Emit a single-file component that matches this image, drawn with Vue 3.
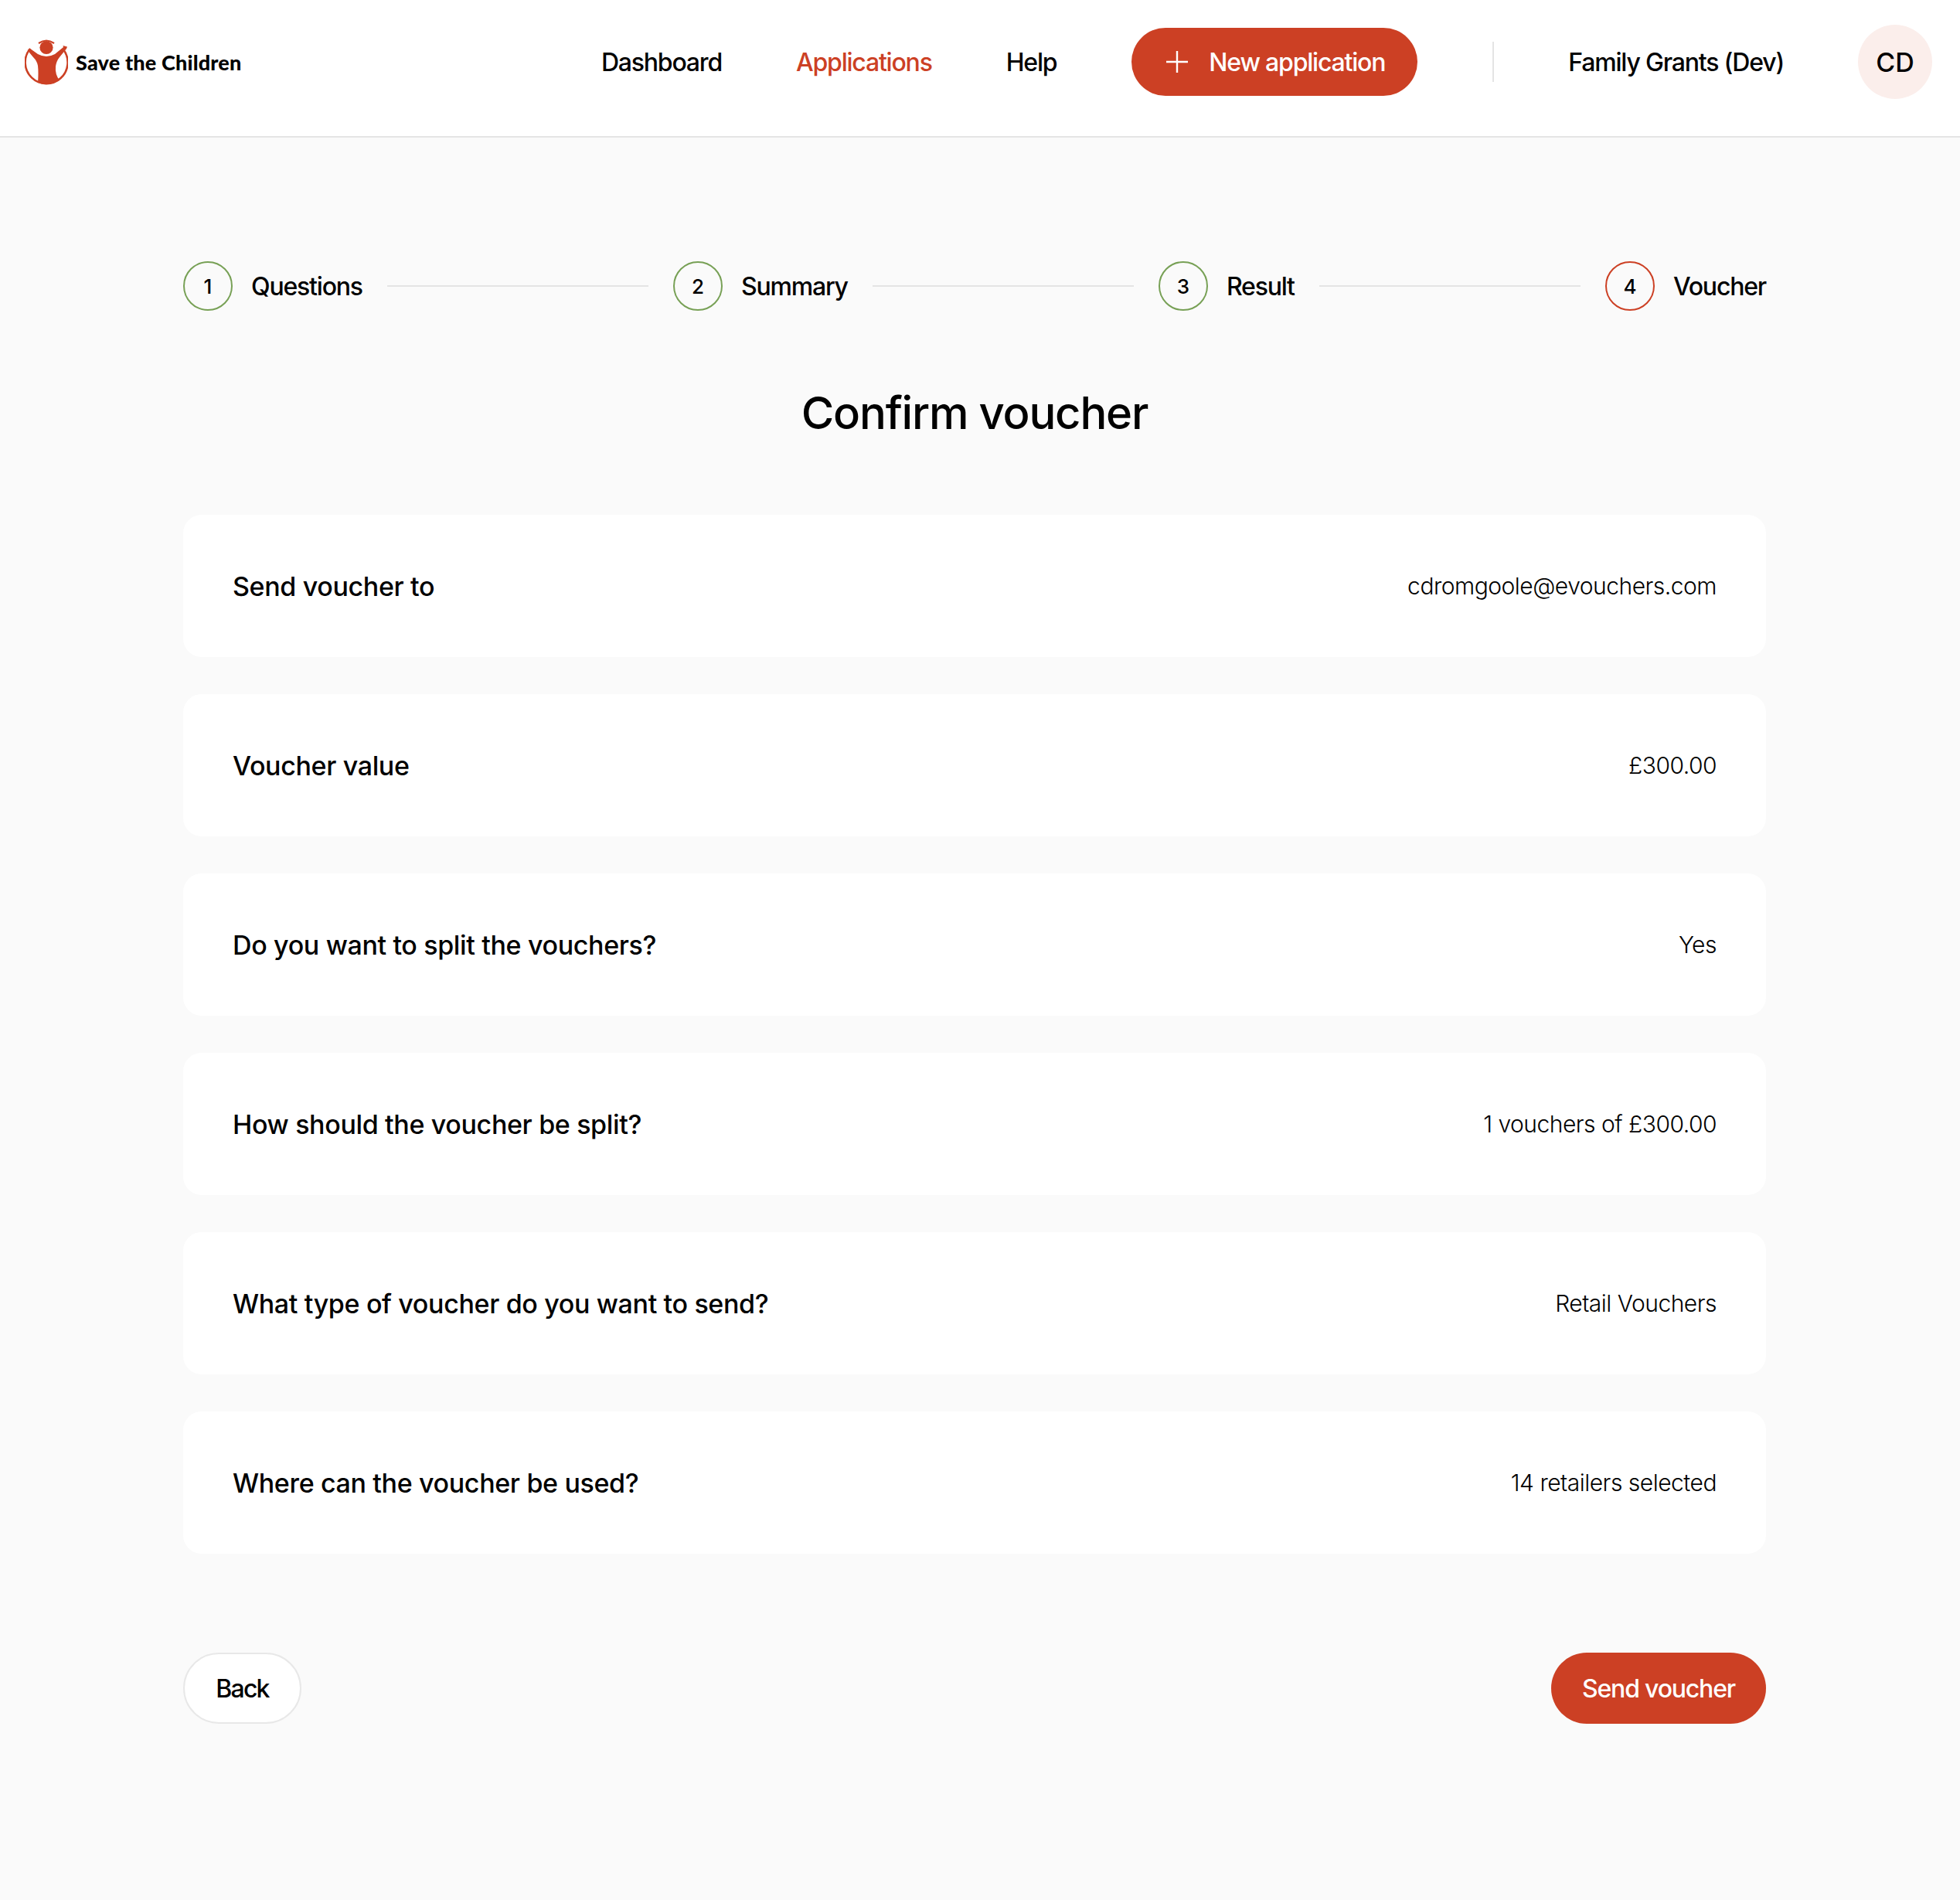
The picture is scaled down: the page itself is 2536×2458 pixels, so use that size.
<script setup>
const steps = [
  { n: 1, label: 'Questions' },
  { n: 2, label: 'Summary' },
  { n: 3, label: 'Result' },
  { n: 4, label: 'Voucher', current: true }
]

const rows = [
  { q: 'Send voucher to', a: 'cdromgoole@evouchers.com' },
  { q: 'Voucher value', a: '£300.00' },
  { q: 'Do you want to split the vouchers?', a: 'Yes' },
  { q: 'How should the voucher be split?', a: '1 vouchers of £300.00' },
  { q: 'What type of voucher do you want to send?', a: 'Retail Vouchers' },
  { q: 'Where can the voucher be used?', a: '14 retailers selected' }
]
</script>

<template>
  <div class="page">
    <header class="top">
      <div class="logo">
        <svg width="56" height="60" viewBox="0 0 56 60">
          <path d="M7 13A27.500 27.500 0 1 0 50 14" fill="none" stroke="#cc4024" stroke-width="2.6" />
          <path d="M18 6Q28 -1 38 6" fill="none" stroke="#cc4024" stroke-width="2.2" />
          <circle cx="28" cy="11.500" r="8.600" fill="#cc4024" />
          <path d="M3.500 15L6.500 12.500L17 20Q28 26 39 20L50 11L49.500 9L55 10.500L54 13L45 24Q41 29 40 36Q39 46 45 54Q36 59 28 59Q22 59 17 57Q18 44 17 35Q16 29 11 24Z" fill="#cc4024" />
        </svg>
        <span class="logo-text">Save the Children</span>
      </div>
      <nav class="nav">
        <a>Dashboard</a>
        <a class="active">Applications</a>
        <a>Help</a>
      </nav>
      <button class="new-btn">
        <svg width="30" height="30" viewBox="0 0 30 30">
          <path d="M15 1V29M1 15H29" stroke="#fff" stroke-width="2.400" fill="none" />
        </svg>
        New application
      </button>
      <div class="divider"></div>
      <span class="org">Family Grants (Dev)</span>
      <div class="avatar">CD</div>
    </header>

    <main class="content">
      <div class="steps">
        <template v-for="(s, i) in steps" :key="s.n">
          <div class="step">
            <span class="num" :class="{ current: s.current }">{{ s.n }}</span>
            <span class="step-label">{{ s.label }}</span>
          </div>
          <div v-if="i < steps.length - 1" class="line"></div>
        </template>
      </div>

      <h1>Confirm voucher</h1>

      <div class="rows">
        <div v-for="r in rows" :key="r.q" class="row">
          <span class="q">{{ r.q }}</span>
          <span class="a">{{ r.a }}</span>
        </div>
      </div>

      <div class="actions">
        <button class="back">Back</button>
        <button class="send">Send voucher</button>
      </div>
    </main>
  </div>
</template>

<style>
html, body { margin: 0; background: #fafafa; }
</style>

<style scoped>
.page { min-height: 2458px; background: #fafafa; color: #000; font-family: Inter, "Noto Sans", sans-serif; font-size: 32px; }
.top { height: 160px; background: #fff; border-bottom: 2px solid #e4e4e4; display: flex; align-items: center; padding: 0 36px 16px 32px; }
.logo { display: flex; align-items: center; gap: 10px; margin-right: auto; }
.logo svg { display: block; }
.logo-text { font-family: Lato, sans-serif; font-weight: 900; font-size: 27px; letter-spacing: 0.18px; }
.nav { display: flex; gap: 96px; font-weight: 500; letter-spacing: -1.2px; }
.active { color: #cc4024; }
.new-btn { margin-left: 97px; height: 88px; width: 370px; border: 0; border-radius: 44px; background: #cc4024; color: #fff; font: inherit; font-weight: 500; letter-spacing: -1.2px; display: flex; align-items: center; gap: 26px; padding: 0 0 0 44px; }
.divider { width: 2px; height: 52px; background: #e4e4e4; margin: 0 96px 0 97px; }
.org { font-weight: 500; letter-spacing: -1.2px; margin-right: 96px; }
.avatar { width: 96px; height: 96px; border-radius: 50%; background: #fbeeeb; display: flex; align-items: center; justify-content: center; font-weight: 500; font-size: 34px; }
.content { width: 2048px; margin-left: 237px; padding-top: 160px; }
.steps { display: flex; align-items: center; gap: 32px; }
.step { display: flex; align-items: center; gap: 24px; font-weight: 500; letter-spacing: -1.2px; }
.num { width: 64px; height: 64px; box-sizing: border-box; border: 2px solid #77a055; border-radius: 50%; display: flex; align-items: center; justify-content: center; font-size: 26px; letter-spacing: 0; }
.num.current { border-color: #cc4024; }
.line { flex: 1; height: 2px; background: #e4e4e4; }
h1 { margin: 94px 0 0; font-size: 58px; line-height: 76px; font-weight: 500; letter-spacing: -1.2px; text-align: center; }
.rows { margin-top: 94px; display: flex; flex-direction: column; gap: 48px; }
.row { height: 184px; background: #fff; border-radius: 24px; display: flex; justify-content: space-between; align-items: center; padding: 0 64px; }
.q { font-weight: 500; font-size: 34px; letter-spacing: -0.35px; }
.a { font-weight: 300; font-size: 30px; letter-spacing: -0.5px; }
.actions { margin-top: 128px; display: flex; justify-content: space-between; align-items: center; }
.actions button { height: 92px; border-radius: 46px; font: inherit; font-weight: 500; letter-spacing: -1.2px; }
.actions .back { width: 153px; background: #fff; border: 2px solid #e8e8e8; color: #000; letter-spacing: -1.8px; }
.send { width: 278px; background: #cc4024; border: 0; color: #fff; }
</style>
